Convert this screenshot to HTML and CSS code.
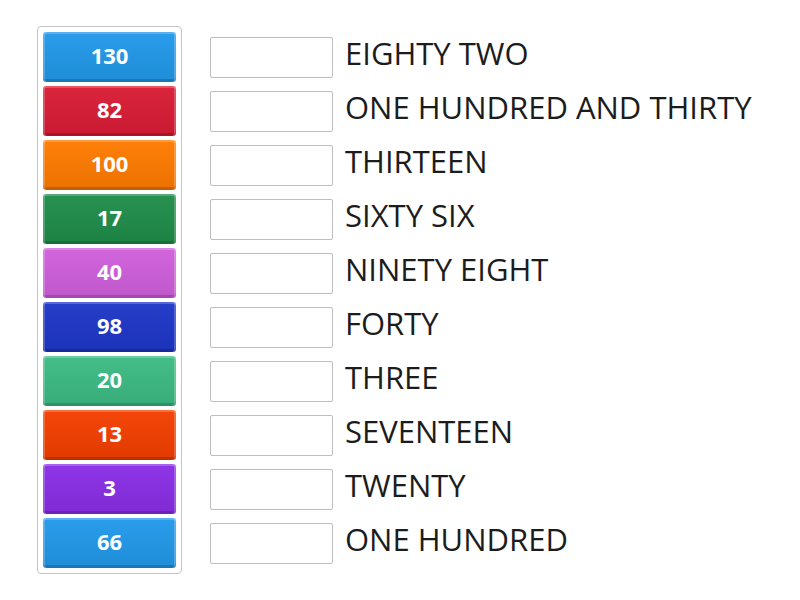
FILE: index.html
```html
<!DOCTYPE html>
<html>
<head>
    <title>Match up</title>
    <link rel="stylesheet" href="styles.css">
</head>
<body>
    <div class="board">
        <div class="tiles">
            <div class="tile sky">130</div>
            <div class="tile red">82</div>
            <div class="tile orange">100</div>
            <div class="tile green">17</div>
            <div class="tile pink">40</div>
            <div class="tile blue">98</div>
            <div class="tile mint">20</div>
            <div class="tile fire">13</div>
            <div class="tile purple">3</div>
            <div class="tile sky">66</div>
        </div>
        <div class="rows">
            <div class="row"><div class="slot"></div><span class="label">EIGHTY TWO</span></div>
            <div class="row"><div class="slot"></div><span class="label">ONE HUNDRED AND THIRTY</span></div>
            <div class="row"><div class="slot"></div><span class="label">THIRTEEN</span></div>
            <div class="row"><div class="slot"></div><span class="label">SIXTY SIX</span></div>
            <div class="row"><div class="slot"></div><span class="label">NINETY EIGHT</span></div>
            <div class="row"><div class="slot"></div><span class="label">FORTY</span></div>
            <div class="row"><div class="slot"></div><span class="label">THREE</span></div>
            <div class="row"><div class="slot"></div><span class="label">SEVENTEEN</span></div>
            <div class="row"><div class="slot"></div><span class="label">TWENTY</span></div>
            <div class="row"><div class="slot"></div><span class="label">ONE HUNDRED</span></div>
        </div>
    </div>
</body>
</html>
```

FILE: styles.css
```css
body {
    margin: 0;
    font-family: "Open Sans", Arial, sans-serif;
    background-color: #fff;
}
.board {
    display: flex;
    align-items: flex-start;
    padding: 26px 0 0 37px;
}
.tiles {
    display: flex;
    flex-direction: column;
    gap: 4px;
    padding: 5px;
    border: 1px solid #c4c4c4;
    border-radius: 4px;
}
.tile {
    width: 133px;
    height: 50px;
    box-sizing: border-box;
    padding-bottom: 4px;
    display: flex;
    align-items: center;
    justify-content: center;
    border-radius: 3px;
    color: #fff;
    font-size: 22px;
    font-weight: bold;
    background-image: linear-gradient(rgba(255,255,255,0.04), rgba(0,0,0,0.08));
    box-shadow: inset 0 2px rgba(255,255,255,0.22),
                inset 2px 0 rgba(255,255,255,0.22),
                inset -2px 0 rgba(255,255,255,0.22),
                inset 0 -3px rgba(0,0,0,0.16);
}
.sky { background-color: #2299ea; }
.red { background-color: #d91c35; }
.orange { background-color: #ff7b00; }
.green { background-color: #1f8d4a; }
.pink { background-color: #d05fdc; }
.blue { background-color: #1e36c8; }
.mint { background-color: #3cbb84; }
.fire { background-color: #f43f00; }
.purple { background-color: #8a2ee6; }
.rows {
    display: flex;
    flex-direction: column;
    gap: 4px;
    padding-top: 6px;
    margin-left: 28px;
}
.row {
    height: 50px;
    display: flex;
    align-items: center;
}
.slot {
    width: 123px;
    height: 41px;
    box-sizing: border-box;
    border: 1px solid #bdbdbd;
    border-radius: 2px;
    background-color: #fff;
}
.label {
    margin-left: 12px;
    margin-bottom: 8px;
    font-size: 31px;
    color: #1c1c1c;
    white-space: nowrap;
}
```
